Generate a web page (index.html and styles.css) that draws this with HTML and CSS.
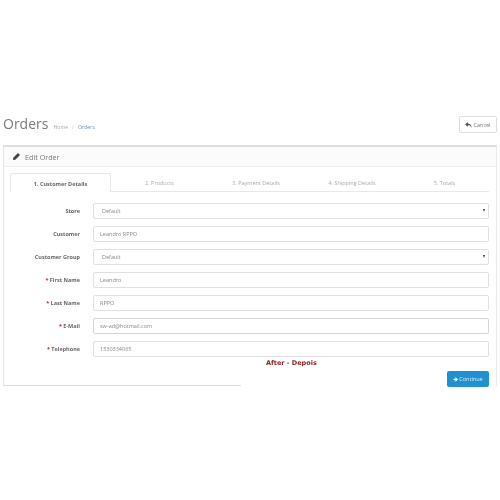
FILE: index.html
```html
<!DOCTYPE html>
<html lang="en">
<head>
<meta charset="utf-8">
<title>Orders</title>
<link rel="stylesheet" href="styles.css">
</head>
<body>
<div class="page">
  <header class="page-header">
    <div class="title-group">
      <h1>Orders</h1>
      <span class="crumb">Home</span>
      <span class="sep">/</span>
      <span class="crumb link">Orders</span>
    </div>
    <button class="btn-cancel" type="button">
      <svg class="ico" viewBox="0 0 12 10" width="7" height="6"><path d="M5 0 0 4l5 4V5.500c3 0 5 1 6 4 .5-4-1.500-7-6-7.200z" fill="#555"/></svg>Cancel
    </button>
  </header>
  <section class="panel">
    <div class="panel-heading">
      <svg class="pencil" viewBox="0 0 12 12" width="7" height="7"><path d="M8.500 0 12 3.500 4 11.500 0 12l.5-4z" fill="#444"/></svg>
      <span>Edit Order</span>
    </div>
    <div class="panel-body">
      <nav class="tabs">
        <div class="tab active">1. Customer Details</div>
        <div class="tab">2. Products</div>
        <div class="tab">3. Payment Details</div>
        <div class="tab">4. Shipping Details</div>
        <div class="tab">5. Totals</div>
      </nav>
      <form class="form">
        <div class="row"><label>Store</label><div class="field select">Default<i class="caret"></i></div></div>
        <div class="row"><label>Customer</label><div class="field">Leandro RPPO</div></div>
        <div class="row"><label>Customer Group</label><div class="field select">Default<i class="caret"></i></div></div>
        <div class="row"><label><b>*</b> First Name</label><div class="field">Leandro</div></div>
        <div class="row"><label><b>*</b> Last Name</label><div class="field">RPPO</div></div>
        <div class="row"><label><b>*</b> E-Mail</label><div class="field dark">sw-ad@hotmail.com</div></div>
        <div class="row"><label><b>*</b> Telephone</label><div class="field">1530334065</div></div>
      </form>
      <div class="footer-row">
        <span class="after">After - Depois</span>
        <button class="btn-continue" type="button">
          <svg class="ico" viewBox="0 0 10 10" width="5" height="5"><path d="M5 0 10 5 5 10V6.500H1V3.500H5z" fill="#fff"/></svg>Continue
        </button>
      </div>
    </div>
  </section>
</div>
</body>
</html>
```
FILE: styles.css
```css
* { box-sizing: border-box; }
html, body { margin: 0; background: #fff; }
body { width: 500px; height: 500px; overflow: hidden; font-family: "Open Sans", sans-serif; color: #777; }
.page { padding: 114px 3px 0; filter: blur(0.3px); }
.page-header { display: flex; justify-content: space-between; align-items: flex-start; height: 31px; }
.title-group { display: flex; align-items: baseline; gap: 4px; color: #aaa; font-size: 5.2px; }
h1 { margin: 0 1px 0 0; font-size: 14px; line-height: 20px; font-weight: 400; color: #7a7a7a; }
.crumb.link { color: #6d93b5; }
.sep { color: #ccc; }
.btn-cancel { width: 38px; height: 17px; margin: 2px 0 0 auto; padding: 0; background: #fff; border: 1px solid #ddd; border-radius: 2px; color: #777; font: 5.5px "Open Sans", sans-serif; display: flex; align-items: center; justify-content: center; gap: 1px; }
.panel { position: relative; width: 494px; height: 241px; border-top: 2px solid #dedede; border-left: 1px solid #e6e6e6; border-right: 1px solid #e9e9e9; }
.panel::after { content: ""; position: absolute; left: -1px; bottom: 0; width: 238px; height: 1px; background: #ddd; }
.panel-heading { height: 20px; background: #fbfbfb; border-bottom: 1px solid #eee; padding-left: 9px; display: flex; align-items: center; gap: 5px; font-size: 7.2px; color: #777; }
.panel-body { padding: 6px 7px 0 6px; }
.tabs { display: grid; grid-template-columns: 101px 97px 96px 96px 89px; height: 19px; border-bottom: 1px solid #e8e8e8; }
.tab { display: flex; align-items: center; justify-content: center; font-size: 5.5px; color: #aaa; padding-top: 1px; }
.tab.active { height: 19px; background: #fff; border: 1px solid #e8e8e8; border-bottom: 0; border-radius: 2px 2px 0 0; font-weight: 700; color: #666; }
.form { display: flex; flex-direction: column; gap: 7px; margin-top: 11px; }
.row { display: flex; align-items: center; gap: 13px; height: 16px; }
label { width: 70px; text-align: right; font-size: 5.5px; font-weight: 700; color: #666; white-space: nowrap; }
label b { color: #c33; }
.field { position: relative; flex: 1; height: 16px; border: 1px solid #e0e0e0; border-radius: 2px; padding-left: 6px; display: flex; align-items: center; font-size: 5.5px; color: #888; background: #fff; }
.field.select { padding-left: 8px; }
.field.dark { border-color: #d4d4d4; }
.caret { position: absolute; right: 3px; top: 5px; border: 1.5px solid transparent; border-top: 3px solid #333; border-bottom: 0; }
.footer-row { position: relative; display: flex; justify-content: flex-end; margin-top: 14px; }
.after { position: absolute; left: 256px; top: -12px; font: 700 6.5px "DejaVu Sans", sans-serif; color: #8a1c1c; }
.btn-continue { width: 42px; height: 16px; padding: 0; background: #1f90d0; border: 0; border-radius: 2px; color: #dff0fa; font: 5.5px "Open Sans", sans-serif; display: flex; align-items: center; justify-content: center; gap: 1px; }
```
